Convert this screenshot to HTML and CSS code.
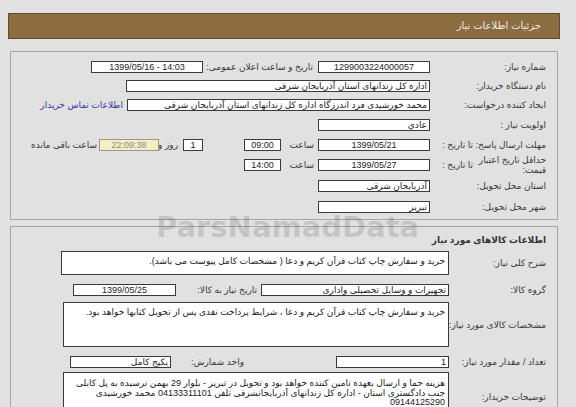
FILE: index.html
```html
<!DOCTYPE html>
<html lang="fa">
<head>
<meta charset="utf-8">
<title>جزئیات اطلاعات نیاز</title>
<link rel="stylesheet" href="styles.css">
</head>
<body>
<div class="page" dir="rtl">
  <div class="bar">جزئیات اطلاعات نیاز</div>

  <div class="box box1">
    <div class="row h19">
      <div class="lbl w116">شماره نیاز:</div>
      <div class="in w112 c">1299003224000057</div>
      <div class="lbl w115 pr5">تاریخ و ساعت اعلان عمومی:</div>
      <div class="in w112 c ltr" dir="ltr">1399/05/16 - 14:03</div>
    </div>
    <div class="row h19">
      <div class="lbl w116">نام دستگاه خریدار:</div>
      <div class="in w304">اداره کل زندانهای استان آذربایجان شرقی</div>
    </div>
    <div class="row h19">
      <div class="lbl w116">ایجاد کننده درخواست:</div>
      <div class="in w303">محمد خورشیدی فرد اندرزگاه اداره کل زندانهای استان آذربایجان شرقی</div>
      <a class="link" href="#">اطلاعات تماس خریدار</a>
    </div>
    <div class="row h21">
      <div class="lbl w116">اولویت نیاز :</div>
      <div class="in w112">عادي</div>
    </div>
    <div class="row h19">
      <div class="lbl w73">مهلت ارسال پاسخ:</div>
      <div class="lbl w43">تا تاریخ :</div>
      <div class="in w112 c">1399/05/21</div>
      <div class="lbl w37 pr4">ساعت</div>
      <div class="in w37 c">09:00</div>
      <div class="gap41"></div>
      <div class="in w20 c">1</div>
      <div class="lbl w24 pr5">روز و</div>
      <div class="in w60 c remain">22:09:38</div>
      <div class="lbl pr2">ساعت باقی مانده</div>
    </div>
    <div class="row h21">
      <div class="lbl w73 wrap">حداقل تاریخ اعتبار قیمت:</div>
      <div class="lbl w43">تا تاریخ :</div>
      <div class="in w112 c">1399/05/27</div>
      <div class="lbl w37 pr4">ساعت</div>
      <div class="in w37 c">14:00</div>
    </div>
    <div class="row h22">
      <div class="lbl w116">استان محل تحویل:</div>
      <div class="in w112">آذربایجان شرقی</div>
    </div>
    <div class="row h19">
      <div class="lbl w116">شهر محل تحویل:</div>
      <div class="in w112">تبریز</div>
    </div>
  </div>

  <div class="box box2">
    <div class="title">اطلاعات کالاهای مورد نیاز</div>
    <div class="row mt4">
      <div class="lbl w97">شرح کلی نیاز:</div>
      <div class="in area w388 h24">خرید و سفارش چاپ کتاب قرآن کریم و دعا ( مشخصات کامل پیوست می باشد).</div>
    </div>
    <div class="row mt9">
      <div class="lbl w97">گروه کالا:</div>
      <div class="in w188">تجهیزات و وسایل تحصیلی واداری</div>
      <div class="lbl w85 pr4">تاریخ نیاز به کالا:</div>
      <div class="in w103 c">1399/05/25</div>
    </div>
    <div class="row mt6">
      <div class="lbl w97">مشخصات کالای مورد نیاز:</div>
      <div class="in area w386 h45">خرید و سفارش چاپ کتاب قرآن کریم و دعا ، شرایط پرداخت نقدی پس از تحویل کتابها خواهد بود.</div>
    </div>
    <div class="row mt9">
      <div class="lbl w97">تعداد / مقدار مورد نیاز:</div>
      <div class="in w113">1</div>
      <div class="lbl w165 pr92">واحد شمارش:</div>
      <div class="in w101">یکپج کامل</div>
    </div>
    <div class="row mt4">
      <div class="lbl w97">توضیحات خریدار:</div>
      <div class="in area w386 h50 lines">هزینه حما و ارسال بعهده تامین کننده خواهد بود و تحویل در تبریز - بلوار 29 بهمن نرسیده به پل کابلی<br>جنب دادگستری استان - اداره کل زندانهای آذربایجانشرقی تلفن 04133311101 محمد خورشیدی<br>09144125290</div>
    </div>
  </div>

  <div class="watermark" dir="ltr">ParsNamadData</div>
</div>
</body>
</html>
```

FILE: styles.css
```css
* { box-sizing: border-box; }

html, body {
  margin: 0;
  padding: 0;
  height: 407px;
  overflow: hidden;
}

body {
  background: #e1e1e1;
  font-family: "Liberation Sans", "DejaVu Sans", sans-serif;
  font-size: 9px;
  color: #333;
}

.page {
  position: relative;
  width: 552px;
  margin-left: 8px;
  padding-top: 13px;
  direction: rtl;
}

.bar {
  height: 26px;
  background: #8c6d42;
  border: 1px solid #5f4b2e;
  color: #f3ece2;
  font-size: 10px;
  line-height: 24px;
  padding-right: 18px;
}

.box {
  margin: 0 2px;
  border: 1px solid #a5a5a5;
  padding-right: 11px;
}

.box1 {
  margin-top: 12px;
  padding-top: 5px;
  padding-bottom: 3px;
}

.box2 {
  margin-top: 6px;
  padding-top: 6px;
  padding-bottom: 40px;
}

.row {
  display: flex;
  align-items: center;
}

.h19 { height: 19px; }
.h21 { height: 21px; }
.h22 { height: 22px; }

.mt4 { margin-top: 4px; }
.mt6 { margin-top: 6px; }
.mt9 { margin-top: 9px; }

.lbl {
  flex: none;
  white-space: nowrap;
  text-align: right;
  color: #383838;
  line-height: 10px;
}

.lbl.wrap {
  white-space: normal;
}

.w20 { width: 20px; }
.w24 { width: 24px; }
.w37 { width: 37px; }
.w43 { width: 43px; }
.w60 { width: 60px; }
.w73 { width: 73px; }
.w85 { width: 85px; }
.w97 { width: 97px; }
.w101 { width: 101px; }
.w103 { width: 103px; }
.w112 { width: 112px; }
.w113 { width: 113px; }
.w115 { width: 115px; }
.w116 { width: 116px; }
.w165 { width: 165px; }
.w188 { width: 188px; }
.w303 { width: 303px; }
.w304 { width: 304px; }
.w386 { width: 386px; }
.w388 { width: 388px; }

.pr2 { padding-right: 2px; }
.pr4 { padding-right: 4px; }
.pr5 { padding-right: 5px; }
.pr92 { padding-right: 92px; }

.gap41 { flex: none; width: 41px; }

.in {
  flex: none;
  height: 12px;
  background: #fff;
  border: 1px solid #3a3a3a;
  line-height: 10px;
  padding: 0 2px;
  white-space: nowrap;
  overflow: hidden;
  color: #222;
  text-align: right;
}

.in.c { text-align: center; }

.in.ltr { direction: ltr; }

.in.remain {
  background: #f2efc6;
  border-color: #9a9a8a;
  color: #8a8a80;
}

.area {
  white-space: normal;
  padding: 4px 3px;
  line-height: 10px;
}

.h24 { height: 24px; }
.h45 { height: 45px; }
.h50 { height: 50px; }

.lines {
  white-space: nowrap;
  line-height: 9.5px;
  padding-top: 6px;
}

.link {
  flex: none;
  margin-right: 4px;
  color: #3636a6;
  text-decoration: none;
  white-space: nowrap;
}

.title {
  height: 14px;
  line-height: 14px;
  font-weight: bold;
  color: #333;
}

.watermark {
  position: absolute;
  left: 148px;
  top: 216px;
  font-family: "DejaVu Sans", sans-serif;
  font-weight: bold;
  font-size: 29px;
  line-height: 22px;
  color: rgba(0, 0, 0, 0.13);
  white-space: nowrap;
  pointer-events: none;
}
```
